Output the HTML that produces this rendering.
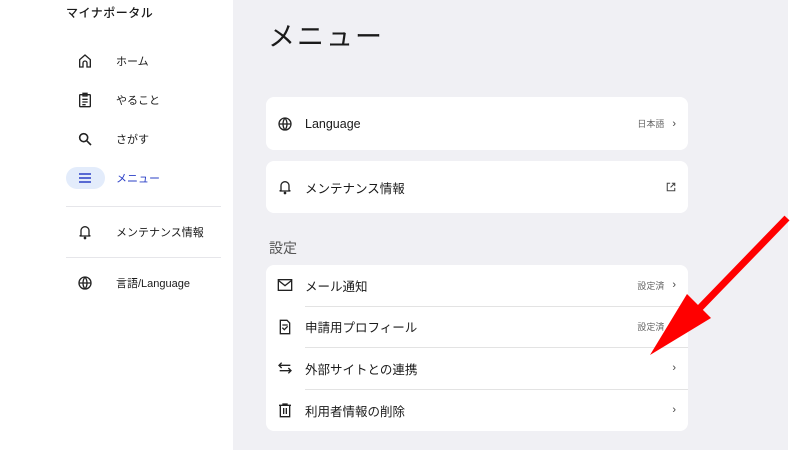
<!DOCTYPE html>
<html><head><meta charset="utf-8"><style>
*{margin:0;padding:0;box-sizing:border-box}
body{width:800px;height:450px;overflow:hidden;background:#fff;font-family:"Liberation Sans","Noto Sans CJK JP",sans-serif;color:#1a1a1a;position:relative}
.main{position:absolute;left:233px;top:0;width:555px;height:450px;background:#f0f0f4}
.a{position:absolute}
.side-t{left:66px;top:4px;font-size:12px;font-weight:500;letter-spacing:0.5px}
.nav{position:absolute;left:66px;width:155px;height:24px;font-size:11px;display:flex;align-items:center}
.nav svg{position:absolute;left:11px}
.nav span{position:absolute;left:50px}
.div{position:absolute;left:66px;width:155px;height:1px;background:#e6e6ea}
.card{position:absolute;left:266px;width:422px;background:#fff;border-radius:8px}
.row{position:relative;height:40.6px;display:flex;align-items:center;font-size:12.5px}
.row svg{position:absolute;left:11px}
.row .t{position:absolute;left:39px}
.row .r{position:absolute;right:12px;font-size:9px;color:#666;display:flex;align-items:center;gap:8px}
.row .c{font-size:11px;color:#444}
.sep{height:1px;background:#e3e3e3;margin-left:39px}
</style></head><body>
<div class="main"></div>
<div class="a side-t">マイナポータル</div>

<div class="nav" style="top:49px"><svg width="16" height="16" viewBox="0 0 24 24" fill="none" stroke="#222" stroke-width="2"><path d="M4 21V10l8-7 8 7v11h-5v-6a3 3 0 0 0-6 0v6z"/></svg><span>ホーム</span></div>
<div class="nav" style="top:88px"><svg width="16" height="16" viewBox="0 0 24 24" fill="none" stroke="#222" stroke-width="2"><rect x="4" y="4" width="16" height="18" rx="1"/><path d="M9 2h6v4H9zM8 11h8M8 15h8M8 19h5"/></svg><span>やること</span></div>
<div class="nav" style="top:127px"><svg width="16" height="16" viewBox="0 0 24 24" fill="none" stroke="#222" stroke-width="2.4"><circle cx="10" cy="10" r="6"/><path d="M14.5 14.5L21 21"/></svg><span>さがす</span></div>
<div class="a" style="left:66px;top:167px;width:39px;height:22px;border-radius:11px;background:#e3ecfb"></div>
<div class="nav" style="top:166px;color:#2a3fc6"><svg width="16" height="16" viewBox="0 0 24 24" fill="none" stroke="#2a3fc6" stroke-width="2.4"><path d="M3 6h18M3 12h18M3 18h18"/></svg><span>メニュー</span></div>
<div class="div" style="top:206px"></div>
<div class="nav" style="top:220px"><svg width="16" height="16" viewBox="0 0 24 24" fill="none" stroke="#222" stroke-width="2"><path d="M6 17V10a6 6 0 0 1 12 0v7l2 1H4z"/><circle cx="12" cy="21" r="1" fill="#222"/></svg><span>メンテナンス情報</span></div>
<div class="div" style="top:257px"></div>
<div class="nav" style="top:271px"><svg width="16" height="16" viewBox="0 0 24 24" fill="none" stroke="#222" stroke-width="2"><circle cx="12" cy="12" r="9"/><path d="M3 12h18M12 3c-4 5-4 13 0 18M12 3c4 5 4 13 0 18"/></svg><span>言語/Language</span></div>

<div class="a" style="left:268px;top:15px;font-size:27px;letter-spacing:2px">メニュー</div>

<div class="card" style="top:97px;height:53px"><div class="row" style="height:53px">
<svg width="16" height="16" viewBox="0 0 24 24" fill="none" stroke="#222" stroke-width="2"><circle cx="12" cy="12" r="9"/><path d="M3 12h18M12 3c-4 5-4 13 0 18M12 3c4 5 4 13 0 18"/></svg>
<span class="t">Language</span><span class="r">日本語<span class="c">›</span></span></div></div>

<div class="card" style="top:161px;height:52px"><div class="row" style="height:52px">
<svg width="16" height="16" viewBox="0 0 24 24" fill="none" stroke="#222" stroke-width="2"><path d="M6 17V10a6 6 0 0 1 12 0v7l2 1H4z"/><circle cx="12" cy="21" r="1" fill="#222"/></svg>
<span class="t">メンテナンス情報</span><span class="r"><svg style="position:static" width="10" height="10" viewBox="0 0 24 24" fill="none" stroke="#444" stroke-width="2.5"><path d="M10 3H3v18h18v-7M14 3h7v7M21 3L11 13"/></svg></span></div></div>

<div class="a" style="left:269px;top:238px;font-size:14px;color:#555">設定</div>

<div class="card" style="top:265px;height:166px">
<div class="row"><svg width="16" height="16" viewBox="0 0 24 24" fill="none" stroke="#222" stroke-width="2"><rect x="2" y="4" width="20" height="16"/><path d="M2 5l10 8 10-8"/></svg><span class="t">メール通知</span><span class="r">設定済<span class="c">›</span></span></div>
<div class="sep"></div>
<div class="row"><svg width="16" height="16" viewBox="0 0 24 24" fill="none" stroke="#222" stroke-width="2"><path d="M5 2h10l4 4v16H5z"/><path d="M8 9h8M8 13l3 3 5-5"/></svg><span class="t">申請用プロフィール</span><span class="r">設定済<span class="c">›</span></span></div>
<div class="sep"></div>
<div class="row"><svg width="16" height="16" viewBox="0 0 24 24" fill="none" stroke="#222" stroke-width="2"><path d="M3 8h17M7 4L3 8l4 4M21 16H4M17 12l4 4-4 4"/></svg><span class="t">外部サイトとの連携</span><span class="r"><span class="c">›</span></span></div>
<div class="sep"></div>
<div class="row"><svg width="16" height="16" viewBox="0 0 24 24" fill="none" stroke="#222" stroke-width="2"><path d="M3 5h18M9 5V3h6v2M5 5v17h14V5M10 9v9M14 9v9"/></svg><span class="t">利用者情報の削除</span><span class="r"><span class="c">›</span></span></div>
</div>

<svg class="a" style="left:0;top:0" width="800" height="450"><line x1="787" y1="218" x2="695" y2="313" stroke="#f00" stroke-width="7"/><polygon points="650,355 687,294 711,318" fill="#f00"/></svg>
</body></html>
